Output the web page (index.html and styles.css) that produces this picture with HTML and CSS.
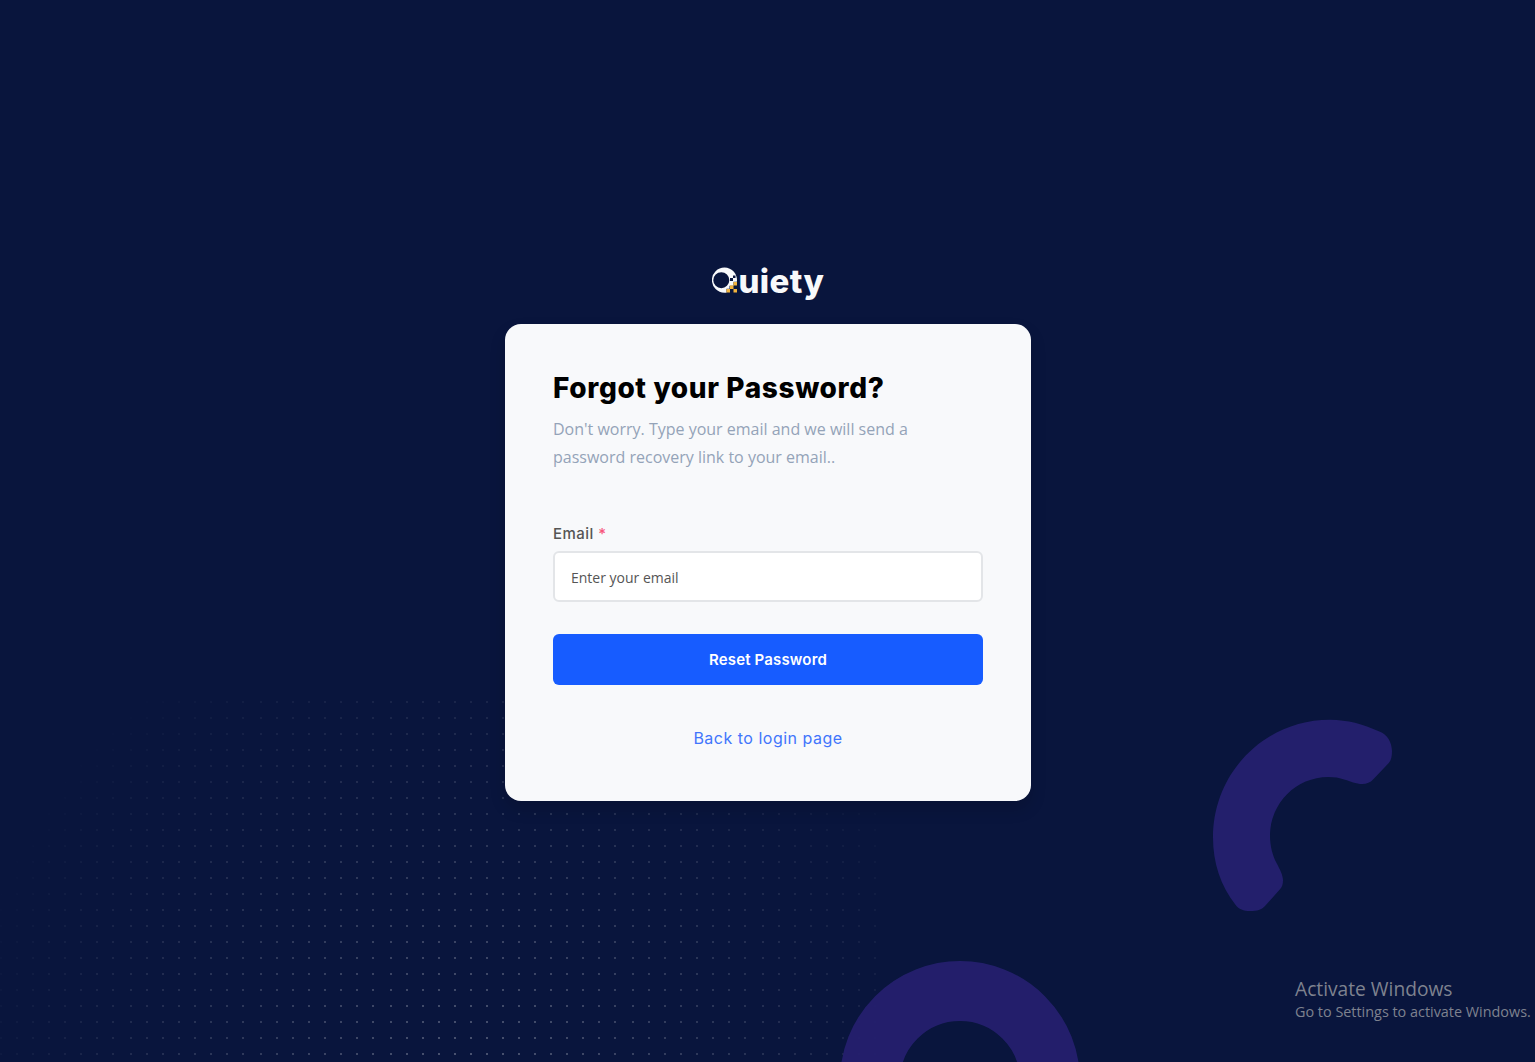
FILE: index.html
```html
<!DOCTYPE html>
<html lang="en">
<head>
<meta charset="utf-8">
<title>Forgot your Password?</title>
<link rel="stylesheet" href="styles.css">
</head>
<body>
<svg class="backdrop" viewBox="0 0 1535 1062" aria-hidden="true">
  <defs>
    <pattern id="dot" width="16" height="16" patternUnits="userSpaceOnUse"><rect width="2" height="2" fill="#fff"/></pattern>
    <radialGradient id="fade" gradientUnits="userSpaceOnUse" cx="468" cy="1085" r="515">
      <stop offset="0" stop-color="#fff" stop-opacity=".28"/>
      <stop offset="1" stop-color="#fff" stop-opacity="0"/>
    </radialGradient>
    <mask id="glow" maskUnits="userSpaceOnUse" x="0" y="690" width="900" height="372"><rect y="690" width="900" height="372" fill="url(#fade)"/></mask>
    <rect id="strip" width="114" height="361" fill="url(#dot)"/>
  </defs>
  <g mask="url(#glow)">
    <use href="#strip" transform="translate(0 701)"/>
    <use href="#strip" transform="translate(130 701)"/>
    <use href="#strip" transform="translate(260 701)"/>
    <use href="#strip" transform="translate(390 701)"/>
    <use href="#strip" transform="translate(502 701)"/>
    <use href="#strip" transform="translate(632 701)"/>
    <use href="#strip" transform="translate(762 701)"/>
  </g>
  <circle cx="960" cy="1081" r="90" fill="none" stroke="#241f6d" stroke-opacity=".96" stroke-width="60"/>
  <path fill="#231f6c" transform="translate(1190 700) scale(.33333)" d="M420 59C475 60 515 71 570 95C592 104 605 125 606 153C606 168 604 180 597 188L550 238C541 248 530 252 517 252C498 252 480 243 465 239C447 233 433 231 415 231C318 231 240 310 240 408C240 436 247 465 260 490C270 509 279 526 279 541C279 553 276 561 270 568L225 618C214 630 202 633 181 633C160 633 146 627 137 615C91 557 69 488 69 412C69 217 225 59 420 59Z"/>
</svg>

<main class="page">
  <a class="logo" aria-label="Quiety">
    <svg class="logo-mark" width="27" height="27" viewBox="0 0 27 27" aria-hidden="true">
      <path fill="#f8f9fb" fill-rule="evenodd" d="M12.500 .5a12.600 12.600 0 1 0 0 25.200h2v-4h3v-3h4v-4h3.400A12.600 12.600 0 0 0 12.500 .5ZM9.300 5.200a8 8 0 1 1 0 16a8 8 0 1 1 0-16Z"/>
      <path fill="#09153d" d="M18 11h3v3h-3zM21 8.500h2.500v2.500h-2.500z"/>
      <path fill="#f2b33d" d="M21.500 15h3.500v3.500h-3.500zM18 18.500h3.500v3.500h-3.500zM14.500 22h3.500v3.500h-3.500zM21.500 22h3.500v3.500h-3.500z"/>
    </svg>
    <span class="logo-text">uiety</span>
  </a>
  <section class="card">
    <h1 class="title">Forgot your Password?</h1>
    <p class="lead">Don't worry. Type your email and we will send a<br>password recovery link to your email..</p>
    <form class="form">
      <label class="label" for="email">Email <span class="required">*</span></label>
      <input class="input" id="email" type="email" placeholder="Enter your email">
      <button class="button" type="button">Reset Password</button>
      <a class="back">Back to login page</a>
    </form>
  </section>
</main>

<aside class="activation">
  <div class="activation-title">Activate Windows</div>
  <div class="activation-text">Go to Settings to activate Windows.</div>
</aside>
</body>
</html>
```
FILE: styles.css
```css
* { box-sizing: border-box; }
body {
  margin: 0;
  height: 1062px;
  overflow: hidden;
  position: relative;
  background: #09153d;
  font-family: "Open Sans", sans-serif;
}
.backdrop { position: absolute; inset: 0; width: 1535px; height: 1062px; }
.page {
  position: relative;
  display: flex;
  flex-direction: column;
  align-items: center;
  padding-top: 262px;
  padding-left: 1px;
}
.logo { display: flex; width: 113px; height: 38px; margin-bottom: 24px; }
.logo-mark { flex: none; margin-top: 5px; }
.logo-text {
  color: #f8f9fb;
  font: 800 33px/38px Inter, sans-serif;
  letter-spacing: .4px;
}
.card {
  width: 526px;
  height: 477px;
  padding: 48px;
  border-radius: 16px;
  background: #f8f9fb;
  box-shadow: 0 8px 16px rgba(0, 0, 0, .15);
}
.title {
  margin: 0 0 9px;
  color: #000;
  font: 800 28px/33px Inter, sans-serif;
  letter-spacing: .62px;
  white-space: nowrap;
}
.lead { margin: 0; padding-top: 1px; color: #94a3b8; font-size: 16px; line-height: 28px; white-space: nowrap; }
.form { display: flex; flex-direction: column; padding-top: 51px; }
.label { color: #555; font: 500 15px/24px Inter, sans-serif; letter-spacing: .45px; margin-bottom: 5px; }
.required { color: #f7567c; }
.input {
  height: 51px;
  padding: 2px 16px 0;
  border: 2px solid #e3e5e8;
  border-radius: 6px;
  background: #fff;
  font: 14px "Open Sans", sans-serif;
  margin-bottom: 32px;
}
.input::placeholder { color: #555; opacity: 1; }
.button {
  height: 51px;
  border: 0;
  border-radius: 6px;
  background: #175cff;
  color: #fff;
  font: 600 15px Inter, sans-serif;
  letter-spacing: .15px;
}
.back { margin-top: 40px; text-align: center; color: #4175fc; font: 400 16px/26px Inter, sans-serif; letter-spacing: .5px; }
.activation { position: absolute; left: 1295px; top: 976px; color: #7e828f; white-space: nowrap; }
.activation-title { font-size: 19.2px; line-height: 26px; }
.activation-text { font-size: 14.4px; line-height: 20px; }
```
